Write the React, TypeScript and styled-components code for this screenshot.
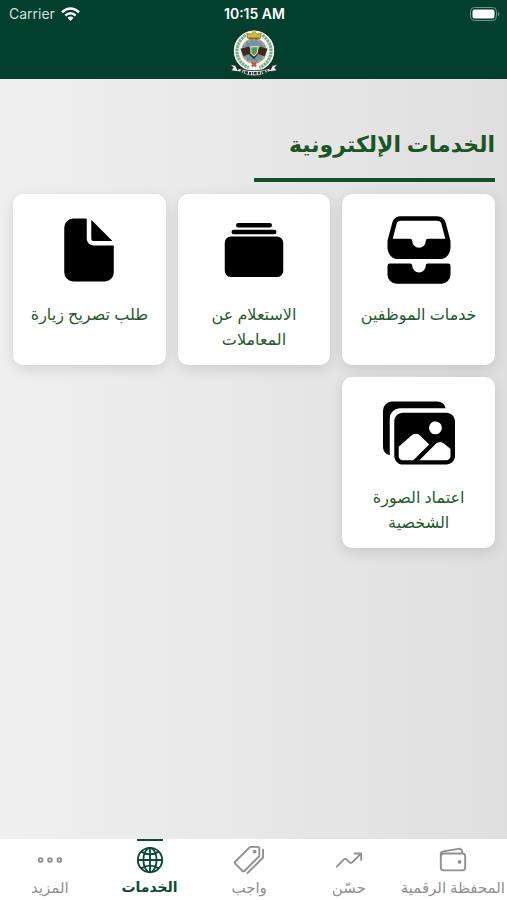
import React from 'react';
import styled, { createGlobalStyle } from 'styled-components';
import type { IconType } from 'react-icons';
import {
  IoAlbums,
  IoDocument,
  IoEllipsisHorizontalOutline,
  IoFileTrayStacked,
  IoGlobeOutline,
  IoImages,
  IoPricetagsOutline,
  IoTrendingUpOutline,
  IoWalletOutline,
} from 'react-icons/io5';

const GlobalStyle = createGlobalStyle`
  *, *::before, *::after { box-sizing: border-box; }
  body { margin: 0; font-family: "Noto Sans", "DejaVu Sans", sans-serif; }
`;

const Screen = styled.div`
  min-height: 100vh;
  display: flex;
  flex-direction: column;
  background: linear-gradient(to right, #f0f0f0, #dfdfdf);
`;

const Header = styled.header`
  height: 79px;
  background: #033f2d;
  color: #fff;
  display: flex;
  flex-direction: column;
  align-items: center;
`;

const StatusBar = styled.div`
  width: 100%;
  height: 28px;
  padding: 0 7px 0 9px;
  display: grid;
  grid-template-columns: 1fr auto 1fr;
  align-items: center;
  font-family: Inter, sans-serif;
  font-size: 14px;
  line-height: 20px;
`;

const Carrier = styled.span`
  display: flex;
  align-items: center;
  gap: 6px;
  color: #d3dfdb;
`;

const Clock = styled.time`
  font-size: 14px;
  font-weight: 600;
`;

const Battery = styled.svg`
  justify-self: end;
`;

const Main = styled.main`
  flex: 1;
  padding: 44px 12px 24px 13px;
`;

const Title = styled.h1`
  width: 50%;
  min-width: 240px;
  margin: 0 0 12px;
  padding-bottom: 15px;
  border-bottom: 4px solid #16502a;
  color: #1b5525;
  font-size: 22px;
  line-height: 40px;
  font-weight: 700;
  white-space: nowrap;
`;

const Services = styled.div`
  display: grid;
  grid-template-columns: repeat(3, 1fr);
  gap: 12px;
`;

const Card = styled.button`
  min-height: 171px;
  padding: 20px 16px 12px;
  display: flex;
  flex-direction: column;
  align-items: center;
  gap: 16px;
  border: 0;
  border-radius: 10px;
  background: #fff;
  box-shadow: 0 4px 14px rgba(0, 0, 0, 0.12);
  color: #000;
  font-family: inherit;
  cursor: pointer;
`;

const CardLabel = styled.span`
  color: #1f5a2b;
  font-size: 16px;
  line-height: 25px;
  text-align: center;
`;

const TabBar = styled.nav`
  height: 61px;
  display: flex;
  background: #fff;
`;

const Tab = styled.a<{ $active?: boolean }>`
  flex: 1 1 0;
  padding: 0 2px;
  display: flex;
  flex-direction: column;
  align-items: center;
  color: ${(p) => (p.$active ? '#0b4a34' : '#8f8f93')};
  font-size: ${(p) => (p.$active ? 14 : 15)}px;
  line-height: 20px;
  font-weight: ${(p) => (p.$active ? 700 : 400)};
  text-decoration: none;
  white-space: nowrap;

  &::before {
    content: '';
    width: 26px;
    height: 2px;
    margin-bottom: 4px;
    background: ${(p) => (p.$active ? '#0b4a34' : 'transparent')};
  }

  svg { margin-bottom: 2px; }
`;

const WifiIcon = () => (
  <svg width="19" height="14" viewBox="0 0 19 14" aria-hidden="true">
    <g fill="none" stroke="#fff" strokeWidth="2.5">
      <path d="M1 5.2Q9.500-2.200 18 5.200" />
      <path d="M4.300 8.500Q9.500 4 14.700 8.500" />
    </g>
    <path d="M6.500 10.800Q9.500 8.300 12.500 10.800L9.500 14Z" fill="#fff" />
  </svg>
);

const Emblem = () => (
  <svg width="54" height="50" viewBox="0 0 50 48" role="img" aria-label="الشعار">
    <circle cx="25" cy="22" r="20" fill="#f4f5ec" stroke="#172d25" strokeWidth="1" />
    <g fill="none" stroke="#72ad91" strokeWidth="3" strokeDasharray="2.500 .6">
      <path d="M17 7C4 16 7 33 20 38" />
      <path d="M33 7C46 16 43 33 30 38" />
    </g>
    <circle cx="25" cy="22" r="12" fill="#7293a6" />
    <circle cx="25" cy="22" r="11" fill="none" stroke="#c3a164" strokeWidth="2" strokeDasharray="3 2" />
    <path d="M12 20L20 18L23 21H28L31 18L38 20L35 27L29 25L25 30L20 25L15 27Z" fill="#3f291e" />
    <path d="M22 18H29L28 24L25 27L22 24Z" fill="#4d9a62" stroke="#eee7c5" />
    <path d="M19 10L18 5L22 6L25 3L28 6L32 5L31 10Z" fill="#d6b82e" stroke="#796b20" strokeWidth=".7" />
    <circle cx="25" cy="3.500" r="1.500" fill="#d7b63b" />
    <path d="M20 10H30" stroke="#58744e" strokeWidth="1.500" />
    <path d="M23 33L27 37M27 33L23 37" stroke="#b65347" strokeWidth="2" />
    <path d="M2 35L8 36L11 39Q25 43 39 39L42 36L48 35L45 38L47 41L39 42Q25 50 11 42L3 41L5 38Z" fill="#f1f1ec" stroke="#172d25" strokeWidth=".8" />
    <path d="M8 36L10 40M42 36L40 40" stroke="#172d25" strokeWidth="2" />
    <path d="M12 41Q25 46 38 41" fill="none" stroke="#26352d" strokeWidth="2.500" strokeDasharray="2 .8 1 .7 3 1" />
  </svg>
);

const services: { label: string; Icon: IconType }[] = [
  { label: 'خدمات الموظفين', Icon: IoFileTrayStacked },
  { label: 'الاستعلام عن المعاملات', Icon: IoAlbums },
  { label: 'طلب تصريح زيارة', Icon: IoDocument },
  { label: 'اعتماد الصورة الشخصية', Icon: IoImages },
];

const tabs: { label: string; Icon: IconType; active?: boolean }[] = [
  { label: 'المحفظة الرقمية', Icon: IoWalletOutline },
  { label: 'حسّن', Icon: IoTrendingUpOutline },
  { label: 'واجب', Icon: IoPricetagsOutline },
  { label: 'الخدمات', Icon: IoGlobeOutline, active: true },
  { label: 'المزيد', Icon: IoEllipsisHorizontalOutline },
];

export default function App() {
  return (
    <Screen dir="rtl" lang="ar">
      <GlobalStyle />
      <Header>
        <StatusBar dir="ltr">
          <Carrier>
            Carrier
            <WifiIcon />
          </Carrier>
          <Clock>10:15 AM</Clock>
          <Battery width="30" height="14" viewBox="0 0 30 14" aria-label="البطارية">
            <rect x=".5" y=".5" width="26" height="13" rx="4" fill="none" stroke="#6f9386" />
            <rect x="2.500" y="2.500" width="22" height="9" rx="2" fill="#fff" />
            <path d="M28 4.500Q31 7 28 9.500Z" fill="#6f9386" />
          </Battery>
        </StatusBar>
        <Emblem />
      </Header>
      <Main>
        <Title>الخدمات الإلكترونية</Title>
        <Services>
          {services.map(({ label, Icon }) => (
            <Card key={label} type="button">
              <Icon size={72} aria-hidden="true" />
              <CardLabel>{label}</CardLabel>
            </Card>
          ))}
        </Services>
      </Main>
      <TabBar>
        {tabs.map(({ label, Icon, active }) => (
          <Tab key={label} href="#" $active={active} aria-current={active ? 'page' : undefined}>
            <Icon size={30} aria-hidden="true" />
            {label}
          </Tab>
        ))}
      </TabBar>
    </Screen>
  );
}
